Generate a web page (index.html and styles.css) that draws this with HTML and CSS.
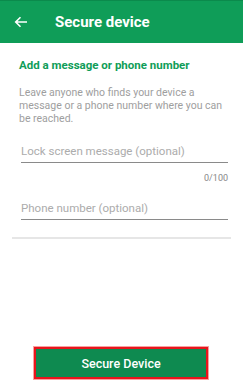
FILE: index.html
```html
<!DOCTYPE html>
<html>
<head>
<meta charset="utf-8">
<link rel="stylesheet" href="styles.css">
</head>
<body>
<div class="screen">
  <header class="appbar">
    <svg class="back" width="14" height="12" viewBox="0 0 14 12"><path d="M13 6H2M6.5 1.2L1.7 6l4.8 4.8" fill="none" stroke="#fff" stroke-width="1.6"/></svg>
    <h1 class="title">Secure device</h1>
  </header>
  <main class="content">
    <h2 class="subtitle">Add a message or phone number</h2>
    <p class="desc">Leave anyone who finds your device a message or a phone number where you can be reached.</p>
    <div class="field">
      <div class="placeholder">Lock screen message (optional)</div>
    </div>
    <div class="counter">0/100</div>
    <div class="field field2">
      <div class="placeholder">Phone number (optional)</div>
    </div>
    <div class="divider"></div>
  </main>
  <div class="footer">
    <button class="btn">Secure Device</button>
  </div>
</div>
</body>
</html>
```
FILE: styles.css
```css
html, body {
  margin: 0;
  padding: 0;
  background: #fff;
}
.screen {
  width: 243px;
  height: 388px;
  display: flex;
  flex-direction: column;
  font-family: Roboto, "Liberation Sans", sans-serif;
}
.appbar {
  height: 43px;
  background: #0f9d58;
  border-top: 1px solid #0b8a4c;
  box-sizing: border-box;
  display: flex;
  align-items: center;
  padding-left: 14px;
}
.back {
  display: block;
}
.title {
  margin: 0 0 0 27px;
  color: #fff;
  font-size: 15px;
  font-weight: 700;
}
.content {
  padding: 15px 15px 0 19px;
}
.subtitle {
  margin: 0;
  font-size: 11.5px;
  font-weight: 700;
  color: #0f9d58;
  line-height: 14px;
}
.desc {
  margin: 14px 0 0 0;
  font-size: 10.5px;
  line-height: 13px;
  color: #9e9e9e;
}
.field {
  margin: 19px 0 0 2px;
  border-bottom: 1px solid #8a8a8a;
  padding-bottom: 3px;
}
.placeholder {
  font-size: 11.5px;
  line-height: 15px;
  color: #acacac;
}
.counter {
  text-align: right;
  font-size: 9px;
  color: #888;
  margin-top: 10px;
  line-height: 11px;
}
.field2 {
  margin-top: 17px;
}
.divider {
  margin: 17px 0 0 -7px;
  height: 2px;
  background: #e6e6e6;
  width: 219px;
}
.footer {
  margin-top: auto;
  display: flex;
  justify-content: center;
  padding-bottom: 9px;
  padding-right: 1px;
}
.btn {
  width: 174px;
  height: 32px;
  background: #0e8a50;
  border: 2px solid #e8141c;
  box-shadow: 0 0 0 1px #f9a0a0;
  color: #fff;
  font-family: Roboto, "Liberation Sans", sans-serif;
  font-size: 12.5px;
  font-weight: 500;
  padding: 0;
}
```
